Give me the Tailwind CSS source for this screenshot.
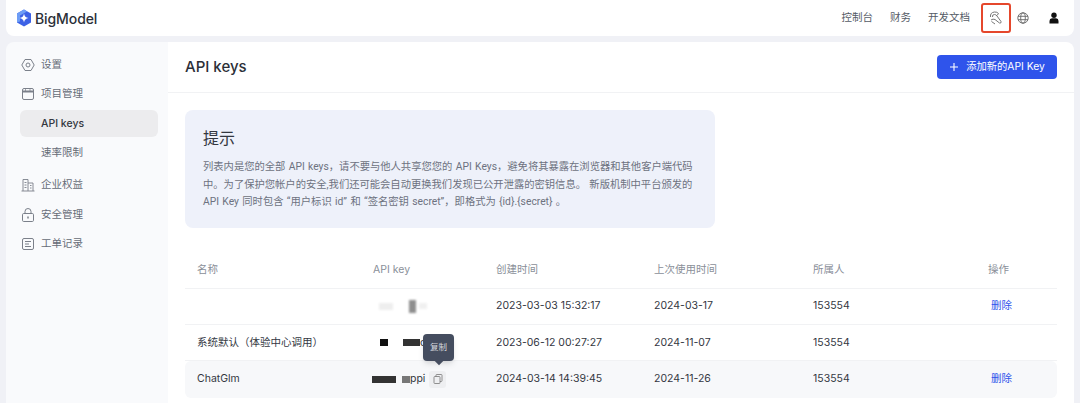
<!DOCTYPE html>
<html lang="zh-CN">
<head>
<meta charset="UTF-8">
<title>BigModel API keys</title>
<script src="https://cdn.jsdelivr.net/npm/@tailwindcss/browser@4"></script>
</head>
<body class="bg-[#f0f1f6] h-[403px] overflow-hidden font-['Inter','Noto_Sans_CJK_SC',sans-serif]">
<div class="px-[6px] flex flex-col gap-[6px] h-[403px]">
  <!-- top bar -->
  <header class="h-[36px] shrink-0 bg-white rounded-b-lg flex items-center pl-[10px] pr-[15px]">
    <svg class="w-[16px] h-[18px]" viewBox="0 0 16 18"><path d="M8 0.500 15 4.500v9L8 17.500 1 13.500v-9z" fill="#3d62e6"/><path d="M1 4.500 8 0.500 11 2.500 4 6.500v6L1 13.500z" fill="#6d9df6"/><path d="M8 4.500 Q8.500 8.500 12.500 9 Q8.500 9.500 8 13.500 Q7.500 9.500 3.500 9 Q7.500 8.500 8 4.500z" fill="#fff"/></svg>
    <span class="ml-[3px] text-[14px] font-medium text-[#2b2f38] tracking-[-0.1px]">BigModel</span>
    <nav class="ml-auto flex items-center text-[10.500px] text-[#555b66]">
      <span>控制台</span>
      <span class="ml-[17px]">财务</span>
      <span class="ml-[17px]">开发文档</span>
      <span class="ml-[11px] w-[30px] h-[30px] border-2 border-[#e5472c] rounded-[3px] flex items-center justify-center">
        <svg class="w-[14px] h-[14px]" viewBox="0 0 14 14" fill="none" stroke="#777" stroke-width="1"><path d="M1.500 6Q1 1.500 5.500 1 Q8 .8 9.500 2.500 L8 4.500 M3.500 6Q3 3.500 5.500 3.500 Q7 3.500 8 5 L12 10.500 Q12.500 12.500 10.500 12 L6 8.500 Q4 7.500 2 9 M2.500 10.500 L6 13"/></svg>
      </span>
      <svg class="ml-[6px] w-[12px] h-[12px]" viewBox="0 0 12 12" fill="none" stroke="#666" stroke-width="0.9"><circle cx="6" cy="6" r="5.200"/><ellipse cx="6" cy="6" rx="2.300" ry="5.200"/><path d="M1 4.300h10M1 7.700h10"/></svg>
      <svg class="ml-[20px] w-[10px] h-[12px]" viewBox="0 0 10 12" fill="#111"><circle cx="5" cy="3.200" r="2.700"/><path d="M0.500 11.500V9Q0.500 6.500 3 6.200H7Q9.500 6.500 9.500 9V11.500z"/></svg>
    </nav>
  </header>

  <div class="flex flex-1 min-h-0">
    <!-- sidebar -->
    <aside class="w-[162px] shrink-0 bg-[#f9fafc] rounded-tl-lg pt-[8px] pl-[15px] pr-[10px] text-[10.500px] text-[#666c77]">
      <div class="h-[30px] flex items-center gap-[6px]">
        <svg class="w-[14px] h-[14px]" viewBox="0 0 14 14" fill="none" stroke="#7b808a"><path d="M4 1.500h6L13.200 7 10 12.500H4L.8 7z"/><circle cx="7" cy="7" r="2"/></svg>
        <span>设置</span>
      </div>
      <div class="h-[28px] flex items-center gap-[6px]">
        <svg class="w-[14px] h-[14px]" viewBox="0 0 14 14" fill="none" stroke="#7b808a"><rect x="1.500" y="1.500" width="11" height="11" rx="1.500"/><path d="M1.500 4.500h11" stroke-width="2"/><path d="M4.500 1.500v3M9 1.500v3" stroke-width=".7"/></svg>
        <span>项目管理</span>
      </div>
      <div class="h-[27px] mt-[2px] -ml-[1px] w-[138px] bg-[#ececee] rounded-md flex items-center pl-[21px] font-medium text-[#33373f]">API keys</div>
      <div class="h-[30px] mt-[1px] flex items-center pl-[20px]">速率限制</div>
      <div class="h-[30px] mt-[2px] flex items-center gap-[6px]">
        <svg class="w-[14px] h-[14px]" viewBox="0 0 14 14" fill="none" stroke="#7b808a" stroke-width="0.900"><path d="M0.500 13h13M2 13V1.500h5V13M7 5h5v8M3.500 4.500h2M3.500 7h2M3.500 9.500h2M9 7.500h1.500M9 10h1.500"/></svg>
        <span>企业权益</span>
      </div>
      <div class="h-[29px] flex items-center gap-[6px]">
        <svg class="w-[14px] h-[14px]" viewBox="0 0 14 14" fill="none" stroke="#7b808a"><rect x="1.500" y="5.500" width="11" height="8" rx="1.200"/><path d="M4 5.500V3.500a3 3 0 0 1 6 0v2"/><path d="M7 8.500v2" stroke-width="1.500"/></svg>
        <span>安全管理</span>
      </div>
      <div class="h-[29px] flex items-center gap-[6px]">
        <svg class="w-[14px] h-[14px]" viewBox="0 0 14 14" fill="none" stroke="#7b808a"><rect x="1.500" y="1.500" width="11" height="11" rx="1.500"/><path d="M4 4.500h6M4 7h4M4 9.500h6"/></svg>
        <span>工单记录</span>
      </div>
    </aside>

    <!-- main -->
    <main class="flex-1 bg-white rounded-tr-lg relative">
      <div class="h-[51px] border-b border-[#f1f2f4] flex items-center justify-between pl-[17px] pr-[17px]">
        <h1 class="text-[15px] font-medium text-[#2b2f38]">API keys</h1>
        <button class="h-[24px] w-[120px] bg-[#2f54eb] rounded-[4px] text-white text-[10.300px] flex items-center justify-center gap-[7px]">
          <svg class="w-[10px] h-[10px]" viewBox="0 0 10 10" stroke="#fff" stroke-width="1.100"><path d="M5 1v8M1 5h8"/></svg>
          添加新的API Key
        </button>
      </div>

      <div class="px-[17px] pt-[17px]">
        <section class="w-[530px] h-[118px] bg-[#eef1fa] rounded-lg pl-[18px] pr-[10px] pt-[16px]">
          <h2 class="text-[16px] leading-[24px] font-normal text-[#33373f]">提示</h2>
          <p class="mt-[8px] text-[10.300px] leading-[17.500px] whitespace-nowrap [word-spacing:0.800px] font-['Roboto','Noto_Sans_CJK_SC',sans-serif] text-[#6d7280]">列表内是您的全部 API keys，请不要与他人共享您您的 API Keys，避免将其暴露在浏览器和其他客户端代码<br>中。为了保护您帐户的安全,我们还可能会自动更换我们发现已公开泄露的密钥信息。 新版机制中平台颁发的<br>API Key 同时包含 “用户标识 id” 和 “签名密钥 secret”，即格式为 {id}.{secret} 。</p>
        </section>

        <!-- keys table -->
        <div class="mt-[24px] text-[10.500px] text-[#33373f]">
          <div class="grid grid-cols-[176px_123px_158px_159px_175px_1fr] items-center h-[37px] pb-[1px] pl-[12px] text-[#8a8f99] border-b border-[#f1f2f4]">
            <span>名称</span><span>API key</span><span>创建时间</span><span>上次使用时间</span><span>所属人</span><span>操作</span>
          </div>
          <div class="grid grid-cols-[176px_123px_158px_159px_175px_1fr] items-center h-[36px] pb-[1px] pl-[12px] border-b border-[#f1f2f4]">
            <span></span>
            <span class="flex items-center h-full">
              <span class="w-[14px] h-[7px] ml-[6px] bg-[#eeeeee] blur-[1px]"></span>
              <span class="w-[7px] h-[13px] ml-[16px] bg-[#8e8e8e] blur-[1px]"></span>
              <span class="w-[8px] h-[6px] ml-[3px] bg-[#f0f0f0] blur-[1px]"></span>
            </span>
            <span>2023-03-03 15:32:17</span><span>2024-03-17</span><span>153554</span><span class="pl-[3px] text-[#2f54eb]">删除</span>
          </div>
          <div class="grid grid-cols-[176px_123px_158px_159px_175px_1fr] items-center h-[36px] pl-[12px] border-b border-[#f1f2f4]">
            <span>系统默认（体验中心调用）</span>
            <span class="flex items-center h-full">
              <span class="w-[8px] h-[7px] ml-[7px] bg-[#111] blur-[0.500px]"></span>
              <span class="w-[17px] h-[7px] ml-[15px] bg-[#333] blur-[0.500px]"></span>
              <span>c</span>
            </span>
            <span>2023-06-12 00:27:27</span><span>2024-11-07</span><span>153554</span><span></span>
          </div>
          <div class="grid grid-cols-[176px_123px_158px_159px_175px_1fr] items-center h-[37px] pb-[1px] pl-[12px] bg-[#f7f8fa] rounded-md">
            <span>ChatGlm</span>
            <span class="flex items-center h-full">
              <span class="w-[24px] h-[7px] -ml-[1px] bg-[#333] blur-[0.500px]"></span>
              <span class="w-[8px] h-[7px] ml-[6px] bg-[#777] blur-[0.500px]"></span>
              <span>ppi</span>
              <span class="ml-[4px] w-[17px] h-[17px] bg-[#eeeff1] rounded-[3px] flex items-center justify-center">
                <svg class="w-[10px] h-[10px]" viewBox="0 0 10 10" fill="none" stroke="#777" stroke-width="0.800"><rect x="1" y="2.500" width="6" height="7" rx="0.800"/><path d="M3 2.500V1.200Q3 .5 3.700 .5H8.300Q9 .5 9 1.200V6.800Q9 7.500 8.300 7.500H7"/></svg>
              </span>
            </span>
            <span>2024-03-14 14:39:45</span><span>2024-11-26</span><span>153554</span><span class="pl-[3px] text-[#2f54eb]">删除</span>
          </div>
        </div>
      </div>

      <!-- tooltip over the copy icon -->
      <div class="absolute left-[255px] top-[292px] w-[31px] h-[27px] bg-[#454d5f] rounded-[4px] flex items-center justify-center text-[8.500px] text-[#d5d8de] shadow-md">
        复制
        <span class="absolute -bottom-[3px] left-[13px] w-[6px] h-[6px] bg-[#454d5f] rotate-45"></span>
      </div>
    </main>
  </div>
</div>
</body>
</html>
